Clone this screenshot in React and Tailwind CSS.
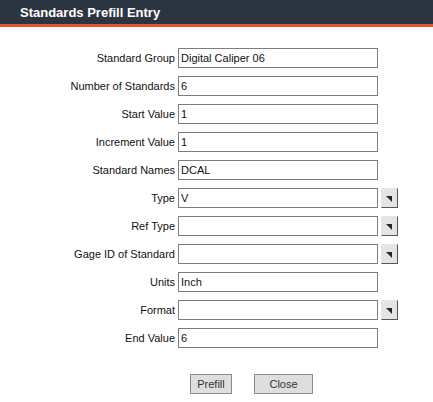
import React from "react";

const rows = [
  { label: "Standard Group", value: "Digital Caliper 06" },
  { label: "Number of Standards", value: "6" },
  { label: "Start Value", value: "1" },
  { label: "Increment Value", value: "1" },
  { label: "Standard Names", value: "DCAL" },
  { label: "Type", value: "V", select: true },
  { label: "Ref Type", value: "", select: true },
  { label: "Gage ID of Standard", value: "", select: true },
  { label: "Units", value: "Inch" },
  { label: "Format", value: "", select: true },
  { label: "End Value", value: "6" },
];

function DropButton() {
  return (
    <div className="ml-[3px] flex h-[20px] w-[17px] items-center justify-center border border-t-[#e8e8e8] border-l-[#e8e8e8] border-r-[#555] border-b-[#555] bg-[#e4e4e4]">
      <svg width="7" height="7" viewBox="0 0 7 7">
        <polygon points="0,1 6,1 6,7" fill="#1e2a33" />
      </svg>
    </div>
  );
}

export default function App() {
  return (
    <div className="min-h-screen bg-white font-['Liberation_Sans',Arial,sans-serif] text-[11px] text-[#111]">
      {/* Header */}
      <div className="h-[27px] border-b-[3px] border-[#e4552c] bg-[#2b3542] pl-[20px] pt-[3px] text-[13px] font-bold text-white">
        Standards Prefill Entry
      </div>

      {/* Form */}
      <div className="flex flex-col gap-[8px] pt-[21px]">
        {rows.map((r) => (
          <div key={r.label} className="flex h-[20px] items-center">
            <label className="w-[178px] pr-[3px] text-right">{r.label}</label>
            <div className="h-[20px] w-[200px] border border-[#7d7d7d] bg-white pl-[2px] leading-[18px]">
              {r.value}
            </div>
            {r.select && <DropButton />}
          </div>
        ))}
      </div>

      {/* Buttons */}
      <div className="mt-[26px] flex h-[20px] pl-[190px]">
        <button className="h-[20px] w-[42px] border border-[#8a8a8a] bg-[#dedede] text-[11px] text-[#333]">
          Prefill
        </button>
        <button className="ml-[22px] h-[20px] w-[59px] border border-[#8a8a8a] bg-[#dedede] text-[11px] text-[#333]">
          Close
        </button>
      </div>
    </div>
  );
}
